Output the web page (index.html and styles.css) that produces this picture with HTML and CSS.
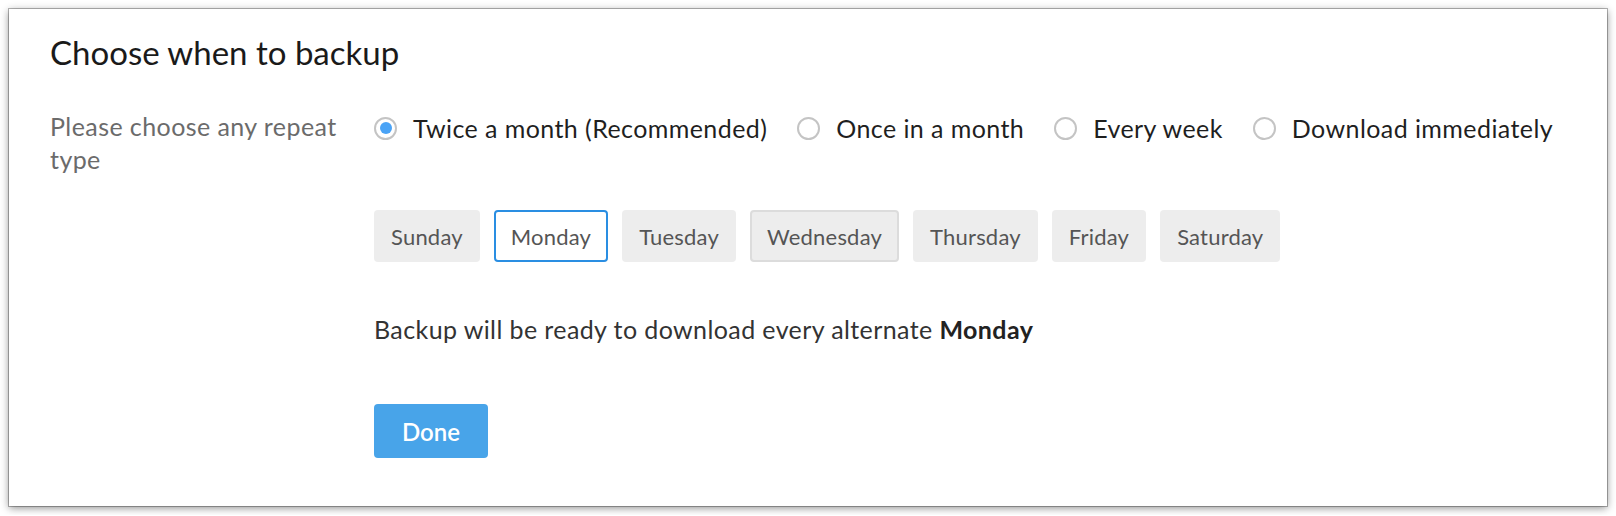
FILE: index.html
```html
<!DOCTYPE html>
<html lang="en">
<head>
<meta charset="utf-8">
<title>Choose when to backup</title>
<link rel="stylesheet" href="styles.css">
</head>
<body>
<div class="card">
  <h1 class="title">Choose when to backup</h1>
  <div class="row">
    <div class="label">Please choose any repeat type</div>
    <div class="content">
      <div class="radios">
        <label class="radio checked"><span class="circle"><span class="dot"></span></span><span class="rtext">Twice a month (Recommended)</span></label>
        <label class="radio"><span class="circle"></span><span class="rtext">Once in a month</span></label>
        <label class="radio"><span class="circle"></span><span class="rtext">Every week</span></label>
        <label class="radio"><span class="circle"></span><span class="rtext">Download immediately</span></label>
      </div>
      <div class="days">
        <span class="day">Sunday</span>
        <span class="day selected">Monday</span>
        <span class="day">Tuesday</span>
        <span class="day hover">Wednesday</span>
        <span class="day">Thursday</span>
        <span class="day">Friday</span>
        <span class="day">Saturday</span>
      </div>
      <p class="note">Backup will be ready to download every alternate <b>Monday</b></p>
      <button class="done">Done</button>
    </div>
  </div>
</div>
</body>
</html>
```

FILE: styles.css
```css
html, body {
  margin: 0;
  padding: 0;
  background: #ffffff;
}

body {
  padding: 9px;
  font-family: "Lato", "Open Sans", sans-serif;
}

.card {
  background: #ffffff;
  box-shadow: 0 0 0 1px rgba(0, 0, 0, 0.28), 0 2px 8px rgba(0, 0, 0, 0.45);
  padding: 23px 41px 48px 41px;
  box-sizing: border-box;
  width: 1598px;
}

.title {
  margin: 0;
  font-size: 33px;
  line-height: 40px;
  font-weight: 400;
  color: #1a1a1a;
}

.row {
  display: flex;
  align-items: flex-start;
  margin-top: 36px;
}

.label {
  width: 324px;
  box-sizing: border-box;
  padding-right: 10px;
  margin-top: 2px;
  flex: none;
  font-size: 25px;
  letter-spacing: 0.42px;
  line-height: 33px;
  color: #6b6b6b;
}

.content {
  display: flex;
  flex-direction: column;
  align-items: flex-start;
}

.radios {
  display: flex;
  align-items: center;
  gap: 30px;
  margin-top: 3px;
}

.radio {
  display: flex;
  align-items: center;
  gap: 16px;
  font-size: 25px;
  letter-spacing: 0.42px;
  line-height: 34px;
  color: #1f1f1f;
}

.circle {
  width: 23px;
  height: 23px;
  box-sizing: border-box;
  border: 2px solid #c4c4c4;
  border-radius: 50%;
  display: flex;
  align-items: center;
  justify-content: center;
  flex: none;
}

.dot {
  width: 12px;
  height: 12px;
  border-radius: 50%;
  background: #4aa3f6;
}

.days {
  display: flex;
  gap: 14px;
  margin-top: 65px;
}

.day {
  height: 52px;
  box-sizing: border-box;
  padding: 0 15px;
  border: 2px solid transparent;
  border-radius: 4px;
  background: #ededed;
  color: #555555;
  font-size: 22px;
  letter-spacing: 0.2px;
  display: flex;
  align-items: center;
}

.day.selected {
  background: #ffffff;
  border-color: #2a8ee2;
}

.day.hover {
  border-color: #dcdcdc;
}

.note {
  margin: 50px 0 0 0;
  font-size: 25px;
  letter-spacing: 0.4px;
  line-height: 34px;
  color: #333333;
}

.note b {
  color: #222222;
  font-weight: 700;
}

.done {
  margin-top: 58px;
  width: 114px;
  height: 54px;
  border: none;
  border-radius: 4px;
  background: #48a4e9;
  color: #ffffff;
  font-family: "Lato", "Open Sans", sans-serif;
  font-size: 24px;
  font-weight: 600;
  padding: 0;
}
```
